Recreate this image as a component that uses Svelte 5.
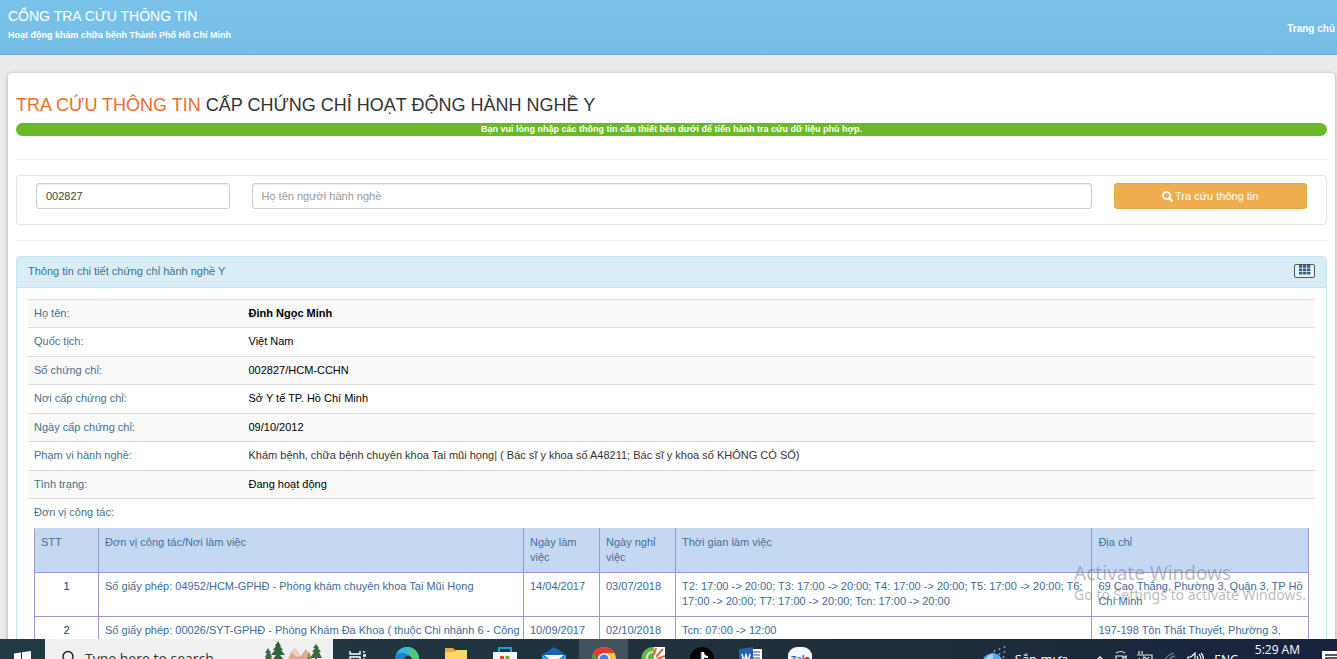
<script lang="ts">
	interface Workplace {
		id: number;
		name: string;
		from: string;
		to: string;
		hours: string;
		address: string;
	}

	let licenseNo = $state('002827');
	let fullName = $state('');

	const details = [
		{ label: 'Họ tên:', value: 'Đinh Ngọc Minh', kind: 'bold' },
		{ label: 'Quốc tịch:', value: 'Việt Nam', kind: '' },
		{ label: 'Số chứng chỉ:', value: '002827/HCM-CCHN', kind: '' },
		{ label: 'Nơi cấp chứng chỉ:', value: 'Sở Y tế TP. Hồ Chí Minh', kind: '' },
		{ label: 'Ngày cấp chứng chỉ:', value: '09/10/2012', kind: '' },
		{
			label: 'Phạm vi hành nghề:',
			value:
				'Khám bệnh, chữa bệnh chuyên khoa Tai mũi họng| ( Bác sĩ y khoa số A48211; Bác sĩ y khoa số KHÔNG CÓ SỐ)',
			kind: 'soft'
		},
		{ label: 'Tình trạng:', value: 'Đang hoạt động', kind: '' }
	];

	const workplaces: Workplace[] = [
		{
			id: 1,
			name: 'Số giấy phép: 04952/HCM-GPHĐ - Phòng khám chuyên khoa Tai Mũi Họng',
			from: '14/04/2017',
			to: '03/07/2018',
			hours:
				'T2: 17:00 -> 20:00; T3: 17:00 -> 20:00; T4: 17:00 -> 20:00; T5: 17:00 -> 20:00; T6: 17:00 -> 20:00; T7: 17:00 -> 20:00; Tcn: 17:00 -> 20:00',
			address: '69 Cao Thắng, Phường 3, Quận 3, TP Hồ Chí Minh'
		},
		{
			id: 2,
			name: 'Số giấy phép: 00026/SYT-GPHĐ - Phòng Khám Đa Khoa ( thuộc Chi nhánh 6 - Công',
			from: '10/09/2017',
			to: '02/10/2018',
			hours: 'Tcn: 07:00 -> 12:00',
			address: '197-198 Tôn Thất Thuyết, Phường 3,'
		}
	];
</script>

<div class="screen">
	<div class="page">
		<header class="topbar">
			<div>
				<div class="brand">CỔNG TRA CỨU THÔNG TIN</div>
				<div class="tagline">Hoạt động khám chữa bệnh Thành Phố Hồ Chí Minh</div>
			</div>
			<a class="home" href="#home">Trang chủ</a>
		</header>

		<main class="card">
			<h1><span>TRA CỨU THÔNG TIN</span> CẤP CHỨNG CHỈ HOẠT ĐỘNG HÀNH NGHỀ Y</h1>
			<div class="notice">
				Bạn vui lòng nhập các thông tin cần thiết bên dưới để tiến hành tra cứu dữ liệu phù hợp.
			</div>
			<hr />

			<form class="search" onsubmit={(e) => e.preventDefault()}>
				<div class="col narrow">
					<input type="text" aria-label="Số chứng chỉ" bind:value={licenseNo} />
				</div>
				<div class="col wide">
					<input
						type="text"
						aria-label="Họ tên người hành nghề"
						placeholder="Họ tên người hành nghề"
						bind:value={fullName}
					/>
				</div>
				<div class="col narrow">
					<button type="submit">
						<svg width="11" height="11" viewBox="0 0 11 11" aria-hidden="true">
							<circle cx="4.6" cy="4.6" r="3.6" fill="none" stroke="#fff" stroke-width="1.8" />
							<path d="M7.3 7.3 10 10" stroke="#fff" stroke-width="2.2" stroke-linecap="round" />
						</svg>
						Tra cứu thông tin
					</button>
				</div>
			</form>
			<hr />

			<section class="panel">
				<div class="panel-heading">
					<span>Thông tin chi tiết chứng chỉ hành nghề Y</span>
					<button type="button" class="grid-btn" aria-label="Danh sách">
						<svg width="12" height="10" viewBox="0 0 12 10" fill="#34607f">
							{#each [0, 4, 8] as x}
								{#each [0, 3.4, 6.8] as y}
									<rect {x} {y} width="3.3" height="2.7" rx="0.5" />
								{/each}
							{/each}
						</svg>
					</button>
				</div>
				<div class="panel-body">
					<table class="details">
						<tbody>
							{#each details as row (row.label)}
								<tr>
									<th scope="row">{row.label}</th>
									<td class={row.kind}>{row.value}</td>
								</tr>
							{/each}
						</tbody>
					</table>

					<div class="work">
						<div class="work-label">Đơn vị công tác:</div>
						<table class="workplaces">
							<colgroup>
								<col class="c-no" />
								<col class="c-name" />
								<col class="c-date" />
								<col class="c-date" />
								<col />
								<col class="c-address" />
							</colgroup>
							<thead>
								<tr>
									<th>STT</th>
									<th>Đơn vị công tác/Nơi làm việc</th>
									<th>Ngày làm việc</th>
									<th>Ngày nghỉ việc</th>
									<th>Thời gian làm việc</th>
									<th>Địa chỉ</th>
								</tr>
							</thead>
							<tbody>
								{#each workplaces as w (w.id)}
									<tr>
										<td class="no">{w.id}</td>
										<td>{w.name}</td>
										<td>{w.from}</td>
										<td>{w.to}</td>
										<td>{w.hours}</td>
										<td>{w.address}</td>
									</tr>
								{/each}
							</tbody>
						</table>
					</div>
				</div>
			</section>
		</main>
	</div>

	<div class="watermark">
		<div class="big">Activate Windows</div>
		<div>Go to Settings to activate Windows.</div>
	</div>

	<footer class="taskbar">
		<div class="start">
			<svg width="17" height="17" viewBox="0 0 17 17" fill="#fff">
				<path d="M0 2.4 7 1.4V8H0zM8 1.2 17 0v8H8zM0 9h7v6.6L0 14.6zM8 9h9v8l-9-1.2z" />
			</svg>
		</div>
		<div class="searchbox">
			<svg width="16" height="18" viewBox="0 0 16 18" fill="none" stroke="#222" stroke-width="1.4">
				<circle cx="7" cy="6.5" r="5" />
				<path d="M4 10.5 0 16" />
			</svg>
			<span>Type here to search</span>
			<svg class="trees" width="58" height="38" viewBox="0 0 58 38">
				<path d="M16 38 27 11l4-4 6 8 5-7 16 30z" fill="#dba994" />
				<path d="M27 11l4-4 6 8-4 1z" fill="#f0cfc0" />
				<path d="M38 38l7-28 8 28z" fill="#8b8b4e" />
				<path d="M3 10h2v28H3zM13 6h2v32h-2zM51 8h2v30h-2z" fill="#6a4a30" />
				<path d="M4 7l3 5H6l2 4H7l3 6H0l2-6H1l2-4H1z" fill="#3b6a45" />
				<path d="M14 0l3 5h-1l3 4h-2l4 5h-5l5 6H8l4-6H7l4-5H9l3-4h-1z" fill="#32613c" />
				<path d="M52 3l3 4h-1l3 4h-2l3 6H46l4-6h-2l3-4h-2z" fill="#3b6a3c" />
			</svg>
		</div>
		<div class="apps">
			<span>
				<svg width="18" height="16" viewBox="0 0 18 16" fill="none" stroke="#fff" stroke-width="1.4">
					<path d="M1 0v3h10V0M1 16V6h10v10M15 0v2M15 7v9" />
					<path d="M14 4.5h3" stroke-width="2.5" />
				</svg>
			</span>
			<span>
				<svg width="24" height="24" viewBox="0 0 24 24">
					<circle cx="12" cy="12" r="12" fill="#1d83d0" />
					<path d="M8 1C15-2 24 3 24 11c0 5-6 7-10 4 3-4 1-8-3-9z" fill="#4fc97c" />
					<path d="M1 8C4 0 12-1 17 1c-3 1-4 4-4 7-4-3-8-3-12 0z" fill="#35b8dc" />
					<circle cx="13" cy="13" r="4" fill="#1d3541" />
				</svg>
			</span>
			<span>
				<svg width="22" height="20" viewBox="0 0 22 20">
					<path d="M0 1h8l2 2h12v17H0z" fill="#e9a93a" />
					<path d="M0 5h10l2-2h10v17H0z" fill="#ffd668" />
				</svg>
			</span>
			<span>
				<svg width="24" height="24" viewBox="0 0 24 24">
					<path d="M6 5V1h12v4" fill="none" stroke="#1fa0dc" stroke-width="2" />
					<path d="M0 5h24v16l-2 3H2l-2-3z" fill="#f5f5f5" />
					<path d="M7 9h4v4H7z" fill="#e0472c" />
					<path d="M12.5 9h4v4h-4z" fill="#72b51c" />
				</svg>
			</span>
			<span>
				<svg width="24" height="22" viewBox="0 0 24 22">
					<path d="M0 8 12 0l12 8v14H0z" fill="#1865b4" />
					<path d="M2 8h20l-10 8z" fill="#f4f8fb" />
					<path d="M0 8l12 8 12-8v14H0z" fill="#35a5e8" />
				</svg>
			</span>
			<span class="active">
				<svg width="24" height="24" viewBox="0 0 24 24">
					<circle cx="12" cy="12" r="12" fill="#f9c532" />
					<path d="M12 12 1.6 6A12 12 0 0 0 12 24l3-8z" fill="#35a352" />
					<path d="M1.6 6A12 12 0 0 1 22.4 6H12L7 14z" fill="#e33b2e" />
					<circle cx="12" cy="12" r="6" fill="#fff" />
					<circle cx="12" cy="12" r="4.6" fill="#3f7de8" />
				</svg>
			</span>
			<span>
				<svg width="24" height="24" viewBox="0 0 24 24">
					<path d="M13 0a12 12 0 1 0 11 14H13z" fill="#68b545" />
					<path d="M13 0h11v14H13z" fill="#fff" />
					<path d="M12 5a6 6 0 1 0 5 9" fill="none" stroke="#d9efc5" stroke-width="2" />
					<path d="M13 8 15 1M15 10l7-8M16 12l8-3" stroke="#e6693e" stroke-width="2" />
				</svg>
			</span>
			<span>
				<svg width="24" height="24" viewBox="0 0 24 24">
					<circle cx="12" cy="12" r="12" fill="#000" />
					<path d="M12 5v11a3 3 0 1 1-3-3M12 5c0 3 2 5 5 5" fill="none" stroke="#3cdce0" stroke-width="2.5" />
					<path d="M13 5v12a3 3 0 1 1-3-3M13 5c0 3 2 5 5 5" fill="none" stroke="#fff" stroke-width="2.2" />
				</svg>
			</span>
			<span>
				<svg width="24" height="22" viewBox="0 0 24 22">
					<path d="M11 2h12v20H11z" fill="#fff" />
					<path d="M13 5h8M13 8h8M13 11h8" stroke="#2b579a" stroke-width="1.2" />
					<path d="M0 2 14 0v22L0 20z" fill="#2b5fb0" />
					<path d="M3 7l2 8 2-7 2 7 2-8" fill="none" stroke="#fff" stroke-width="1.5" />
				</svg>
			</span>
			<span>
				<svg width="24" height="24" viewBox="0 0 24 24">
					<rect width="24" height="24" rx="9" fill="#f6f9fd" />
					<text x="3" y="15" font-size="9" font-weight="bold" fill="#2266c8">Zalo</text>
					<circle cx="18" cy="17" r="6" fill="#d92532" />
				</svg>
			</span>
		</div>
		<div class="tray">
			<svg class="weather" width="26" height="26" viewBox="0 0 26 26">
				<path d="M0 17a8 8 0 0 1 6-9 9 9 0 0 1 13 9z" fill="#5aa9e8" />
				<path d="M3 13a8 8 0 0 1 7-5v9z" fill="#a6d1f5" />
				<path
					d="M12 4l-1 2M17 2l-1 2M22 0l-1 2M17 7l-1 2M22 5l-1 2M21 10l-1 2"
					stroke="#6e9fd0"
					stroke-width="1.5"
				/>
			</svg>
			<span class="forecast">Sắp mưa</span>
			<svg width="10" height="8" viewBox="0 0 10 8" fill="none" stroke="#fff" stroke-width="1.3">
				<path d="M1 6l4-4 4 4" />
			</svg>
			<svg width="12" height="18" viewBox="0 0 12 18" fill="none" stroke="#e8ebef" stroke-width="1.2">
				<path d="M1 3q5-3 9 0M1 6h7v8H1zM8 8l3-2v7l-3-2" />
			</svg>
			<svg width="16" height="16" viewBox="0 0 16 16" fill="none" stroke="#e8ebef" stroke-width="1.2">
				<path d="M2 0v3M5 0v3M0 4h7v3q-3 4-5 0M8 4h7v8H5M8 6l4 5M12 6l-4 5" />
			</svg>
			<svg width="14" height="14" viewBox="0 0 14 14" fill="none" stroke="#77808d" stroke-width="1.3">
				<path d="M1 9q3-6 10-8M4 10q3-5 8-6M7 12q2-4 5-5" />
			</svg>
			<svg width="17" height="14" viewBox="0 0 17 14" fill="none" stroke="#fff" stroke-width="1.2">
				<path d="M1 5h3l4-4v12L4 9H1zM10 4q2 3 0 6M12 2q4 5 0 10M14 1q5 6 0 12" />
			</svg>
			<span class="lang">ENG</span>
			<span class="clock">5:29 AM</span>
			<svg class="bell" width="15" height="16" viewBox="0 0 15 16">
				<path d="M0 0h15v16H0z" fill="#fff" />
				<path d="M3 4h12M3 7h12M3 10h12" stroke="#18223a" stroke-width="1.4" />
			</svg>
		</div>
	</footer>
</div>

<style>
	:global(body) {
		margin: 0;
		background: #ebebeb;
	}

	.screen {
		position: relative;
		display: flex;
		flex-direction: column;
		height: 100vh;
		overflow: hidden;
		font-family: 'Liberation Sans', Arial, sans-serif;
		font-size: 11px;
		line-height: 15px;
		color: #333;
	}

	.page {
		flex: 1;
		min-height: 0;
		overflow: hidden;
		background: #ebebeb;
	}

	.topbar {
		display: flex;
		justify-content: space-between;
		align-items: center;
		box-sizing: border-box;
		height: 55px;
		padding: 0 2px 4px 8px;
		background: linear-gradient(#79c2e9, #76bde5);
		border-bottom: 1px solid #6ca9cf;
		color: #fff;
	}

	.brand {
		font-size: 14px;
		line-height: 20px;
	}

	.tagline {
		font-size: 9px;
		font-weight: bold;
		line-height: 18px;
	}

	.home {
		padding-top: 6px;
		color: #fff;
		font-weight: bold;
		font-size: 10px;
		text-decoration: none;
	}

	.card {
		margin: 18px 2px 0 8px;
		padding: 20px 8px;
		background: #fff;
		border-radius: 4px;
		box-shadow: 0 1px 4px rgba(0, 0, 0, 0.3);
	}

	h1 {
		margin: 0 0 6px;
		font-size: 18px;
		font-weight: normal;
		line-height: 24px;
	}

	h1 span {
		color: #e8702a;
	}

	.notice {
		height: 13px;
		border-radius: 7px;
		background: #69b928;
		color: #fff;
		font-size: 9px;
		font-weight: bold;
		line-height: 12px;
		text-align: center;
	}

	hr {
		margin: 15px 0;
		border: 0;
		border-top: 1px solid #eee;
	}

	.notice + hr {
		margin-top: 23px;
	}

	.search {
		display: flex;
		padding: 7px 8px 15px;
		border: 1px solid #e3e3e3;
		border-radius: 4px;
	}

	.col {
		box-sizing: border-box;
		padding: 0 11px;
	}

	.narrow {
		width: calc(100% / 6);
	}

	.wide {
		width: calc(100% * 4 / 6);
	}

	.search input,
	.search button {
		display: block;
		box-sizing: border-box;
		width: 100%;
		height: 26px;
		border: 1px solid #ccc;
		border-radius: 3px;
		font-family: inherit;
		font-size: 11px;
	}

	.search input {
		padding: 0 9px;
		background: #fff;
		color: #444;
		box-shadow: inset 0 1px 1px rgba(0, 0, 0, 0.075);
	}

	.search input::placeholder {
		color: #999;
		opacity: 1;
	}

	.search button {
		display: flex;
		align-items: center;
		justify-content: center;
		gap: 2px;
		border-color: #e9a445;
		background: #f0ad4e;
		color: #fff;
	}

	.panel {
		border: 1px solid #bce8f1;
		border-radius: 4px;
	}

	.panel-heading {
		display: flex;
		justify-content: space-between;
		align-items: center;
		box-sizing: border-box;
		height: 31px;
		padding: 0 11px 2px;
		border-bottom: 1px solid #bce8f1;
		background: #d9edf7;
		color: #3f7190;
	}

	.grid-btn {
		display: flex;
		justify-content: center;
		box-sizing: border-box;
		width: 21px;
		height: 14px;
		padding: 0;
		border: 1px solid #555;
		border-radius: 2px;
		background: #e6f1f7;
	}

	.panel-body {
		padding: 11px;
	}

	table {
		width: 100%;
		border-collapse: collapse;
		table-layout: fixed;
	}

	th,
	td {
		font-weight: normal;
		text-align: left;
		vertical-align: top;
	}

	.details tr {
		height: 29px;
	}

	.details tr:nth-child(odd) {
		height: 28px;
		background: #f9f9f9;
	}

	.details th,
	.details td {
		padding: 6px 6px 0;
		border-top: 1px solid #ddd;
	}

	.details tr:last-child > * {
		border-bottom: 1px solid #ddd;
	}

	.details th {
		box-sizing: border-box;
		width: calc(100% / 6);
		color: #47718f;
	}

	.details td {
		color: #000;
	}

	.details .bold {
		font-weight: bold;
	}

	.details .soft {
		color: #333;
	}

	.work {
		padding: 6px;
	}

	.work-label {
		margin-bottom: 8px;
		color: #47718f;
	}

	.workplaces th,
	.workplaces td {
		height: 30px;
		padding: 6px 2px 7px 6px;
		border: 1px solid #9c97d3;
		color: #3b6c9b;
	}

	.workplaces th {
		border-top-color: #c5d8f1;
		background: #c5d8f1;
		color: #40709b;
	}

	.workplaces .no {
		padding-right: 6px;
		color: #14406e;
		text-align: center;
	}

	.c-no {
		width: 64px;
	}

	.c-name {
		width: 425px;
	}

	.c-date {
		width: 76px;
	}

	.c-address {
		width: 17%;
	}

	.watermark {
		position: absolute;
		right: 31px;
		bottom: 54px;
		color: rgba(120, 120, 120, 0.5);
		font-family: 'Noto Sans', sans-serif;
		font-size: 14px;
		line-height: 20px;
	}

	.watermark .big {
		font-size: 19px;
		line-height: 24px;
	}

	.taskbar {
		display: flex;
		flex: none;
		height: 20px;
		overflow: hidden;
		background: linear-gradient(90deg, #213a44, #1e2f3b 65%, #18213d);
		color: #fff;
		font-family: 'Open Sans', sans-serif;
	}

	.start {
		display: flex;
		justify-content: center;
		box-sizing: border-box;
		width: 45px;
		padding-top: 12px;
	}

	.searchbox {
		display: flex;
		gap: 8px;
		box-sizing: border-box;
		width: 288px;
		padding: 11px 11px 0 16px;
		background: #f0f0f0;
		color: #333;
		font-size: 14px;
		line-height: 18px;
	}

	.searchbox svg {
		flex: none;
	}

	.searchbox .trees {
		margin: -9px 0 0 auto;
	}

	.apps {
		display: flex;
		width: 492px;
		height: 40px;
	}

	.apps span {
		display: flex;
		flex: 1;
		justify-content: center;
		padding-top: 8px;
	}

	.apps span:first-child {
		padding-top: 12px;
	}

	.apps .active {
		background: #42535d;
	}

	.tray {
		display: flex;
		gap: 10px;
		align-items: center;
		height: 40px;
		margin-left: auto;
	}

	.weather {
		margin-right: -4px;
	}

	.forecast {
		margin-right: 17px;
		font-size: 13px;
	}

	.lang {
		font-size: 12px;
	}

	.clock {
		align-self: flex-start;
		margin: 3px 12px 0 6px;
		font-size: 12px;
	}

	.bell {
		align-self: flex-start;
		margin-top: 12px;
	}
</style>
